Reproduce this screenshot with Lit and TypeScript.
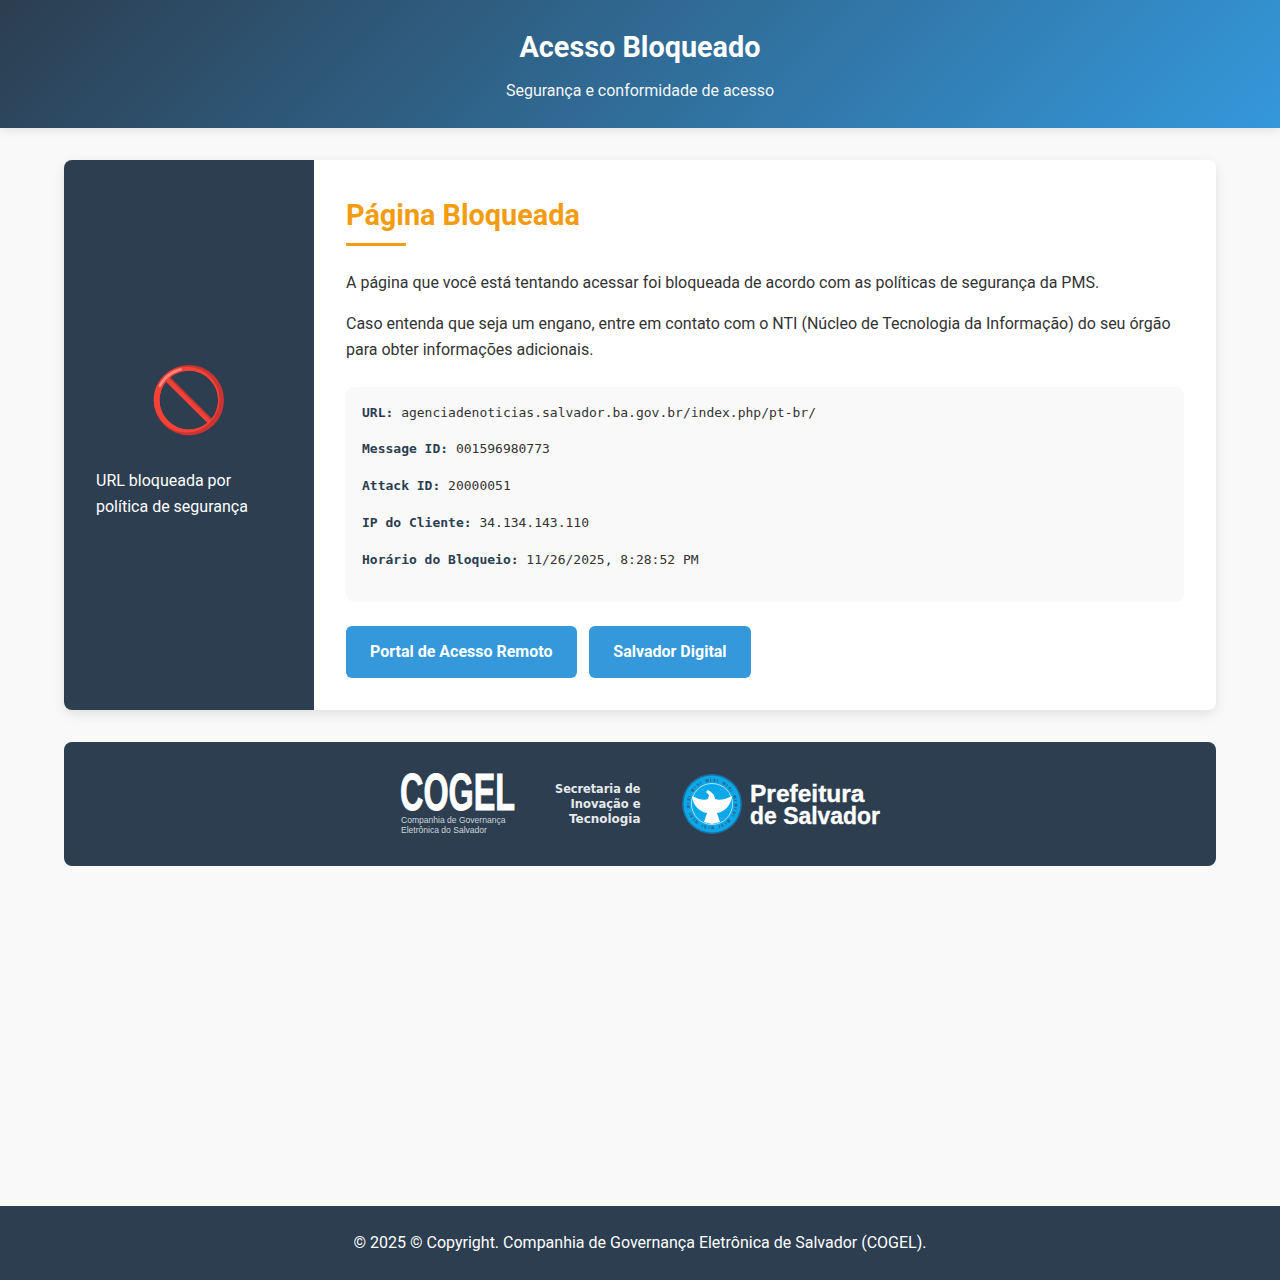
import { LitElement, html, css } from "lit";
import { customElement } from "lit/decorators.js";

@customElement("app-root")
export class AppRoot extends LitElement {
  static styles = css`
    :host { display: flex; flex-direction: column; min-height: 1280px; background: #f9f9f9; color: #333; font-family: Roboto, sans-serif; font-size: 16px; line-height: 1.6; }
    * { box-sizing: border-box; }
    header { padding: 24px 32px; text-align: center; color: #fff; background: linear-gradient(135deg, #2c3e50, #3498db); box-shadow: 0 2px 10px rgba(0,0,0,.1); }
    h1 { margin: 0 0 8px; font-size: 28.8px; font-weight: 700; }
    header p { margin: 0; opacity: .95; }
    main { flex: 1; padding: 32px 64px; display: flex; flex-direction: column; gap: 32px; }
    .card { display: flex; background: #fff; border-radius: 8px; overflow: hidden; box-shadow: 0 4px 12px rgba(0,0,0,.1); }
    aside { width: 250px; flex: none; padding: 32px; background: #2c3e50; color: #fff; display: flex; flex-direction: column; justify-content: center; }
    .emoji { font-size: 64px; text-align: center; margin-bottom: 16px; font-family: "Noto Color Emoji", sans-serif; }
    .reason { margin: 0; }
    .content { flex: 1; padding: 32px; }
    h2 { margin: 0 0 24px; padding-bottom: 8px; position: relative; color: #f39c12; font-size: 28.8px; font-weight: 700; }
    h2::after { content: ""; position: absolute; left: 0; bottom: 0; width: 60px; height: 3px; background: #f39c12; }
    .content > p { margin: 0 0 16px; }
    .details { margin-top: 24px; padding: 16px; border-radius: 8px; background: #f9f9f9; font-family: "DejaVu Sans Mono", monospace; font-size: 13px; }
    .details p { margin: 0 0 16px; }
    .details b { color: #2c3e50; }
    .buttons { display: flex; gap: 12.8px; margin-top: 24px; }
    .btn { padding: 12.8px 24px; border-radius: 6px; background: #3498db; color: #fff; font-weight: 700; }
    .logos { padding: 32px; border-radius: 8px; background: #2c3e50; display: flex; justify-content: center; align-items: center; }
    .logos svg { display: block; overflow: visible; }
    .cogel { font-family: "Liberation Sans", sans-serif; font-weight: 700; fill: #fff; stroke: #fff; stroke-width: .9px; }
    .cogel-sub { font-family: "Liberation Sans", sans-serif; fill: #cfd5da; font-size: 9px; }
    .sec { font-family: "DejaVu Sans", sans-serif; font-weight: 700; fill: #e6e9ec; font-size: 12px; }
    .pref { font-family: "Liberation Sans", sans-serif; font-weight: 700; fill: #fff; stroke: #fff; stroke-width: .35px; font-size: 24px; }
    footer { padding: 24px; background: #2c3e50; color: #fff; text-align: center; }
  `;

  render() {
    return html`
      <header>
        <h1>Acesso Bloqueado</h1>
        <p>Segurança e conformidade de acesso</p>
      </header>
      <main>
        <section class="card">
          <aside>
            <div class="emoji">🚫</div>
            <p class="reason">URL bloqueada por política de segurança</p>
          </aside>
          <div class="content">
            <h2>Página Bloqueada</h2>
            <p>A página que você está tentando acessar foi bloqueada de acordo com as políticas de segurança da PMS.</p>
            <p>Caso entenda que seja um engano, entre em contato com o NTI (Núcleo de Tecnologia da Informação) do seu órgão para obter informações adicionais.</p>
            <div class="details">
              <p><b>URL:</b> agenciadenoticias.salvador.ba.gov.br/index.php/pt-br/</p>
              <p><b>Message ID:</b> 001596980773</p>
              <p><b>Attack ID:</b> 20000051</p>
              <p><b>IP do Cliente:</b> 34.134.143.110</p>
              <p><b>Horário do Bloqueio:</b> 11/26/2025, 8:28:52 PM</p>
            </div>
            <div class="buttons">
              <div class="btn">Portal de Acesso Remoto</div>
              <div class="btn">Salvador Digital</div>
            </div>
          </div>
        </section>
        <section class="logos">
          <svg width="480" height="60" viewBox="0 0 480 60">
            <g transform="translate(0 36) scale(.635 1)"><text class="cogel" font-size="51">COGEL</text></g>
            <g transform="translate(1 49) scale(.95 1)"><text class="cogel-sub">Companhia de Governança</text></g>
            <g transform="translate(1 59) scale(.95 1)"><text class="cogel-sub">Eletrônica do Salvador</text></g>
            <text class="sec" x="155" y="19" textLength="85.5" lengthAdjust="spacingAndGlyphs">Secretaria de</text>
            <text class="sec" x="170.5" y="34" textLength="70" lengthAdjust="spacingAndGlyphs">Inovação e</text>
            <text class="sec" x="169" y="49" textLength="71.5" lengthAdjust="spacingAndGlyphs">Tecnologia</text>
            <g transform="translate(312 30)">
              <circle r="30" fill="#1f6d9f"/>
              <circle r="28.5" fill="#0aa8e8"/>
              <circle r="23.8" fill="none" stroke="#2a6f9e" stroke-width="3" stroke-dasharray="3 1.5 1 2.5 2 1.5 1 5"/>
              <circle r="20.5" fill="#0aa8e8" stroke="#d5f0fb" stroke-width=".8"/>
              <path fill="#fff" d="M-20 -8 C-14 -5 -8 -3 -4 -5 L-3 -9 L-6 -12 L-4 -14 L-1 -12 L2 -9 L3 -5 C8 -3 14 -5 20 -8 C19 2 12 8 5 9 L8 18 L0 20 L-8 18 L-5 9 C-12 8 -19 2 -20 -8 Z"/>
            </g>
            <text class="pref" x="350" y="28" textLength="114.5" lengthAdjust="spacingAndGlyphs">Prefeitura</text>
            <text class="pref" x="350" y="50" textLength="130" lengthAdjust="spacingAndGlyphs">de Salvador</text>
          </svg>
        </section>
      </main>
      <footer>© 2025 © Copyright. Companhia de Governança Eletrônica de Salvador (COGEL).</footer>
    `;
  }
}
